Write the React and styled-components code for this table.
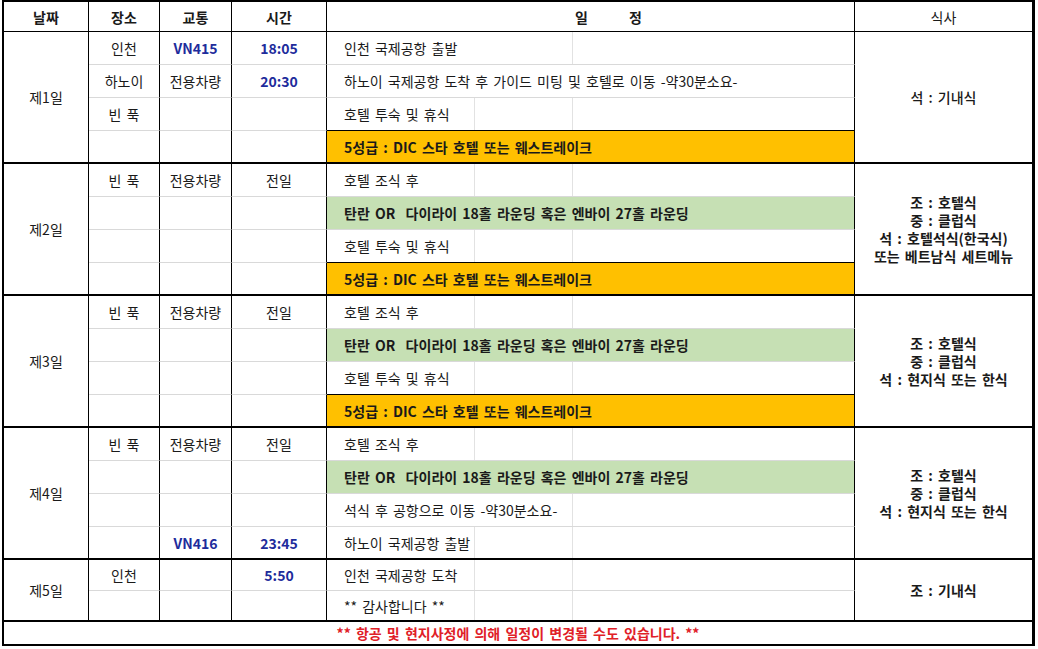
import React from 'react'
import styled, { createGlobalStyle, css } from 'styled-components'

const GlobalStyle = createGlobalStyle`
  html, body {
    margin: 0;
    padding: 0;
    background: #fff;
  }
  body {
    font-family: "Noto Sans CJK KR", "Noto Sans", sans-serif;
    color: #1a1a1a;
  }
`;

const Page = styled.div`
  padding: 0 0 0 2px;
`;

const Sheet = styled.table`
  border-collapse: separate;
  border-spacing: 0;
  table-layout: fixed;
  width: 1033px;
  border: 2px solid #000;
  border-right-width: 3px;
  font-size: 14px;
`;

const Col = styled.col`
  width: ${p => p.$w}px;
`;

const Row = styled.tr`
  height: ${p => p.$h}px;
`;

const Cell = styled.td`
  box-sizing: border-box;
  padding: 0;
  vertical-align: middle;
  text-align: ${p => (p.$left ? 'left' : 'center')};
  padding-left: ${p => (p.$left ? '17px' : '0')};
  white-space: pre;
  word-spacing: 2px;
  overflow: visible;
  border-right: ${p => (p.$last ? 'none' : '1px solid #000')};
  border-bottom: ${p =>
    p.$edge === 'day'
      ? '2px solid #000'
      : p.$edge === 'thin'
      ? '1px solid #000'
      : p.$edge === 'none'
      ? 'none'
      : '1px solid #d9d9d9'};
  font-weight: ${p => (p.$bold ? 700 : 400)};
  color: ${p => (p.$blue ? '#1e2c9c' : p.$red ? '#e02027' : '#1a1a1a')};
  background-color: ${p =>
    p.$fill === 'orange' ? '#ffc000' : p.$fill === 'green' ? '#c6e0b4' : '#fff'};
  ${p =>
    p.$marks &&
    p.$marks.length > 0 &&
    css`
      background-image: ${p.$marks
        .map(
          x =>
            `linear-gradient(to right, transparent ${x}px, #e2e2e2 ${x}px, #e2e2e2 ${x + 1}px, transparent ${x + 1}px)`
        )
        .join(', ')};
    `}
`;

const HeadCell = styled(Cell)`
  font-weight: ${p => (p.$light ? 400 : 700)};
`;

const SpacedTitle = styled.span`
  display: inline-block;
  padding-left: 36px;
  word-spacing: 38px;
`;

const MealLines = styled.div`
  line-height: 18px;
  font-weight: ${p => (p.$bold ? 700 : 500)};
`;

const BOTH = [147, 245];
const RIGHT = [245];

const GOLF = '탄란 OR  다이라이 18홀 라운딩 혹은 엔바이 27홀 라운딩';
const HOTEL = '5성급 : DIC 스타 호텔 또는 웨스트레이크';

const days = [
  {
    label: '제1일',
    meal: ['석 : 기내식'],
    mealBold: false,
    h: 33,
    rows: [
      { place: '인천', trans: 'VN415', transBlue: true, time: '18:05', timeBlue: true, plan: '인천 국제공항 출발', marks: RIGHT },
      { place: '하노이', trans: '전용차량', time: '20:30', timeBlue: true, plan: '하노이 국제공항 도착 후 가이드 미팅 및 호텔로 이동 -약30분소요-' },
      { place: '빈 푹', plan: '호텔 투숙 및 휴식', marks: BOTH, below: 'thin' },
      { plan: HOTEL, fill: 'orange' },
    ],
  },
  {
    label: '제2일',
    meal: ['조 : 호텔식', '중 : 클럽식', '석 : 호텔석식(한국식)', '또는 베트남식 세트메뉴'],
    mealBold: true,
    h: 33,
    rows: [
      { place: '빈 푹', trans: '전용차량', time: '전일', plan: '호텔 조식 후', marks: BOTH },
      { plan: GOLF, fill: 'green' },
      { plan: '호텔 투숙 및 휴식', marks: BOTH, below: 'thin' },
      { plan: HOTEL, fill: 'orange' },
    ],
  },
  {
    label: '제3일',
    meal: ['조 : 호텔식', '중 : 클럽식', '석 : 현지식 또는 한식'],
    mealBold: true,
    h: 33,
    rows: [
      { place: '빈 푹', trans: '전용차량', time: '전일', plan: '호텔 조식 후', marks: BOTH },
      { plan: GOLF, fill: 'green' },
      { plan: '호텔 투숙 및 휴식', marks: BOTH, below: 'thin' },
      { plan: HOTEL, fill: 'orange' },
    ],
  },
  {
    label: '제4일',
    meal: ['조 : 호텔식', '중 : 클럽식', '석 : 현지식 또는 한식'],
    mealBold: true,
    h: 33,
    rows: [
      { place: '빈 푹', trans: '전용차량', time: '전일', plan: '호텔 조식 후', marks: BOTH },
      { plan: GOLF, fill: 'green' },
      { plan: '석식 후 공항으로 이동 -약30분소요-', marks: RIGHT },
      { trans: 'VN416', transBlue: true, time: '23:45', timeBlue: true, plan: '하노이 국제공항 출발', marks: BOTH },
    ],
  },
  {
    label: '제5일',
    meal: ['조 : 기내식'],
    mealBold: true,
    h: 31,
    rows: [
      { place: '인천', time: '5:50', timeBlue: true, plan: '인천 국제공항 도착', marks: BOTH },
      { plan: '** 감사합니다 **', marks: BOTH },
    ],
  },
];

const DayRows = ({ day }) =>
  day.rows.map((r, i) => {
    const lastRow = i === day.rows.length - 1;
    const edge = lastRow ? 'day' : 'gray';
    const planEdge = lastRow ? 'day' : r.below || 'gray';
    return (
      <Row key={i} $h={day.h}>
        {i === 0 && (
          <Cell rowSpan={day.rows.length} $edge="day">
            {day.label}
          </Cell>
        )}
        <Cell $edge={edge}>{r.place}</Cell>
        <Cell $edge={edge} $bold={r.transBlue} $blue={r.transBlue}>
          {r.trans}
        </Cell>
        <Cell $edge={edge} $bold={r.timeBlue} $blue={r.timeBlue}>
          {r.time}
        </Cell>
        <Cell $left $edge={planEdge} $fill={r.fill} $bold={!!r.fill} $marks={r.marks}>
          {r.plan}
        </Cell>
        {i === 0 && (
          <Cell rowSpan={day.rows.length} $edge="day" $last>
            <MealLines $bold={day.mealBold}>
              {day.meal.map(m => (
                <div key={m}>{m}</div>
              ))}
            </MealLines>
          </Cell>
        )}
      </Row>
    );
  });

const App = () => {
  return (
    <Page>
      <GlobalStyle />
      <Sheet>
        <colgroup>
          <Col $w={85} />
          <Col $w={71} />
          <Col $w={72} />
          <Col $w={95} />
          <Col $w={528} />
          <Col $w={177} />
        </colgroup>
        <tbody>
          <Row $h={30}>
            <HeadCell $edge="thin">날짜</HeadCell>
            <HeadCell $edge="thin">장소</HeadCell>
            <HeadCell $edge="thin">교통</HeadCell>
            <HeadCell $edge="thin">시간</HeadCell>
            <HeadCell $edge="thin">
              <SpacedTitle>일 정</SpacedTitle>
            </HeadCell>
            <HeadCell $edge="thin" $last $light>
              식사
            </HeadCell>
          </Row>
          {days.map(d => (
            <DayRows key={d.label} day={d} />
          ))}
          <Row $h={22}>
            <Cell colSpan={6} $last $edge="none" $bold $red>
              ** 항공 및 현지사정에 의해 일정이 변경될 수도 있습니다. **
            </Cell>
          </Row>
        </tbody>
      </Sheet>
    </Page>
  )
}

export default App
